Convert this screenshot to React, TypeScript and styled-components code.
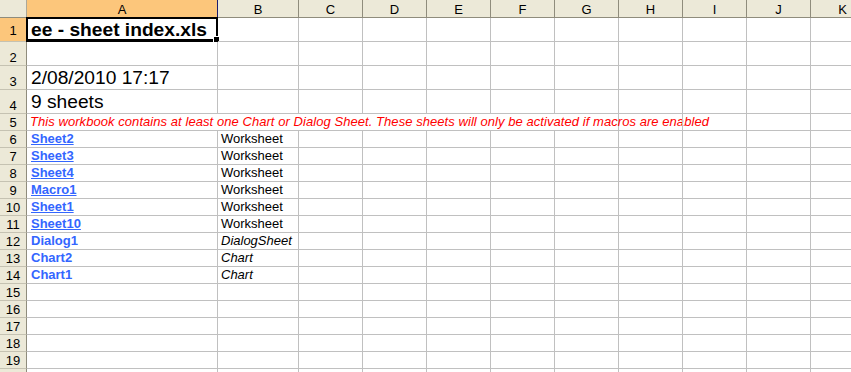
import React from "react";
import styled, { createGlobalStyle, css } from "styled-components";

const GlobalStyle = createGlobalStyle`
  html, body {
    margin: 0;
    padding: 0;
    background: #ffffff;
    overflow: hidden;
  }
  body {
    font-family: "Liberation Sans", Arial, sans-serif;
  }
`;

const COLS = ["A", "B", "C", "D", "E", "F", "G", "H", "I", "J", "K"];
const ROW_HEIGHTS = [24, 24, 24, 24, 17, 17, 17, 17, 17, 17, 17, 17, 17, 17, 17, 17, 17, 17, 17, 17];

const Sheet = styled.div`
  display: grid;
  grid-template-columns: 27px 191px 81px repeat(8, 64px) 64px;
  grid-template-rows: 18px ${ROW_HEIGHTS.map((h) => `${h}px`).join(" ")};
  width: max-content;
  font-family: "Liberation Sans", Arial, sans-serif;
`;

const Corner = styled.div`
  box-sizing: border-box;
  background: #ece9d8;
  border-right: 1px solid #aca899;
  border-bottom: 1px solid #8f8c7c;
`;

const ColHeader = styled.div<{ $selected?: boolean }>`
  box-sizing: border-box;
  display: flex;
  align-items: center;
  justify-content: center;
  font-size: 13px;
  color: #000;
  padding-top: 1px;
  background: #ece9d8;
  border-right: 1px solid #8f8c7c;
  border-bottom: 1px solid #8f8c7c;
  ${(p) =>
    p.$selected &&
    css`
      background: #fcc67b;
      border-right-color: #1c1c6e;
      border-bottom-color: #1c1c6e;
    `}
`;

const RowHeader = styled.div<{ $selected?: boolean }>`
  box-sizing: border-box;
  display: flex;
  align-items: flex-end;
  justify-content: center;
  font-size: 13px;
  line-height: 15px;
  color: #000;
  background: #ece9d8;
  border-right: 1px solid #8f8c7c;
  border-bottom: 1px solid #c5c2b2;
  ${(p) =>
    p.$selected &&
    css`
      background: #fcc67b;
      border-right-color: #1c1c6e;
      align-items: center;
      padding-top: 2px;
    `}
`;

type Kind = "title" | "big" | "note" | "link" | "plainlink" | "text" | "italic" | "none";

const Cell = styled.div<{ $kind?: Kind }>`
  box-sizing: border-box;
  position: relative;
  display: flex;
  align-items: flex-end;
  padding: 0 2px 1px 3px;
  border-right: 1px solid #c0c0c0;
  border-bottom: 1px solid #c0c0c0;
  white-space: nowrap;
  font-size: 13px;
  line-height: 15px;
  color: #000;
  min-width: 0;
  ${(p) => {
    switch (p.$kind) {
      case "title":
        return css`
          font-size: 19.2px;
          line-height: 22px;
          font-weight: bold;
          padding-left: 4px;
          padding-bottom: 0px;
        `;
      case "big":
        return css`
          font-size: 19.2px;
          line-height: 22px;
          padding-left: 4px;
          padding-bottom: 0px;
        `;
      case "note":
        return css`
          color: #ff0000;
          font-style: italic;
          letter-spacing: 0.06px;
        `;
      case "link":
        return css`
          color: #3366ff;
          font-weight: bold;
          text-decoration: underline;
          padding-left: 4px;
        `;
      case "plainlink":
        return css`
          color: #3366ff;
          font-weight: bold;
          padding-left: 4px;
        `;
      case "italic":
        return css`
          font-style: italic;
        `;
      default:
        return css``;
    }
  }}
`;

const Selection = styled.div`
  position: absolute;
  left: -1px;
  top: -1px;
  right: -1px;
  bottom: -1px;
  border: 2px solid #000;
  border-bottom-width: 3px;
  pointer-events: none;
`;

const FillHandle = styled.div`
  position: absolute;
  right: -4px;
  bottom: -4px;
  width: 5px;
  height: 5px;
  background: #000;
  border: 1px solid #fff;
  box-sizing: content-box;
`;

type RowData = { a?: string; aKind?: Kind; b?: string; bKind?: Kind; spanNote?: boolean };

const ROWS: RowData[] = [
  { a: "ee - sheet index.xls", aKind: "title" },
  {},
  { a: "2/08/2010 17:17", aKind: "big" },
  { a: "9 sheets", aKind: "big" },
  {
    a: "This workbook contains at least one Chart or Dialog Sheet. These sheets will only be activated if macros are enabled",
    aKind: "note",
    spanNote: true,
  },
  { a: "Sheet2", aKind: "link", b: "Worksheet", bKind: "text" },
  { a: "Sheet3", aKind: "link", b: "Worksheet", bKind: "text" },
  { a: "Sheet4", aKind: "link", b: "Worksheet", bKind: "text" },
  { a: "Macro1", aKind: "link", b: "Worksheet", bKind: "text" },
  { a: "Sheet1", aKind: "link", b: "Worksheet", bKind: "text" },
  { a: "Sheet10", aKind: "link", b: "Worksheet", bKind: "text" },
  { a: "Dialog1", aKind: "plainlink", b: "DialogSheet", bKind: "italic" },
  { a: "Chart2", aKind: "plainlink", b: "Chart", bKind: "italic" },
  { a: "Chart1", aKind: "plainlink", b: "Chart", bKind: "italic" },
  {},
  {},
  {},
  {},
  {},
  {},
];

// the note in row 5 overflows across A..G (ends inside G)
const NOTE_SPAN_COLS = 7;
// only rows 1..19 are fully visible in the window; row 20 is a sliver
const LAST_LABELLED_ROW = 19;

export default function App() {
  return (
    <>
      <GlobalStyle />
      <Sheet>
        <Corner />
        {COLS.map((c, i) => (
          <ColHeader key={c} $selected={i === 0}>
            {c}
          </ColHeader>
        ))}
        {ROWS.map((r, ri) => {
          const rowNum = ri + 1;
          const cells: React.ReactNode[] = [];
          cells.push(
            <RowHeader key={`h${rowNum}`} $selected={rowNum === 1}>
              {rowNum <= LAST_LABELLED_ROW ? rowNum : null}
            </RowHeader>
          );
          if (r.spanNote) {
            cells.push(
              <Cell
                key={`a${rowNum}`}
                $kind={r.aKind}
                style={{ gridColumn: `span ${NOTE_SPAN_COLS}` }}
              >
                {r.a}
              </Cell>
            );
            for (let ci = NOTE_SPAN_COLS; ci < COLS.length; ci++) {
              cells.push(<Cell key={`${COLS[ci]}${rowNum}`} />);
            }
          } else {
            COLS.forEach((c, ci) => {
              if (ci === 0) {
                cells.push(
                  <Cell key={`${c}${rowNum}`} $kind={r.aKind}>
                    {r.a}
                    {rowNum === 1 && (
                      <Selection>
                        <FillHandle />
                      </Selection>
                    )}
                  </Cell>
                );
              } else if (ci === 1) {
                cells.push(
                  <Cell key={`${c}${rowNum}`} $kind={r.bKind}>
                    {r.b}
                  </Cell>
                );
              } else {
                cells.push(<Cell key={`${c}${rowNum}`} />);
              }
            });
          }
          return <React.Fragment key={rowNum}>{cells}</React.Fragment>;
        })}
      </Sheet>
    </>
  );
}
